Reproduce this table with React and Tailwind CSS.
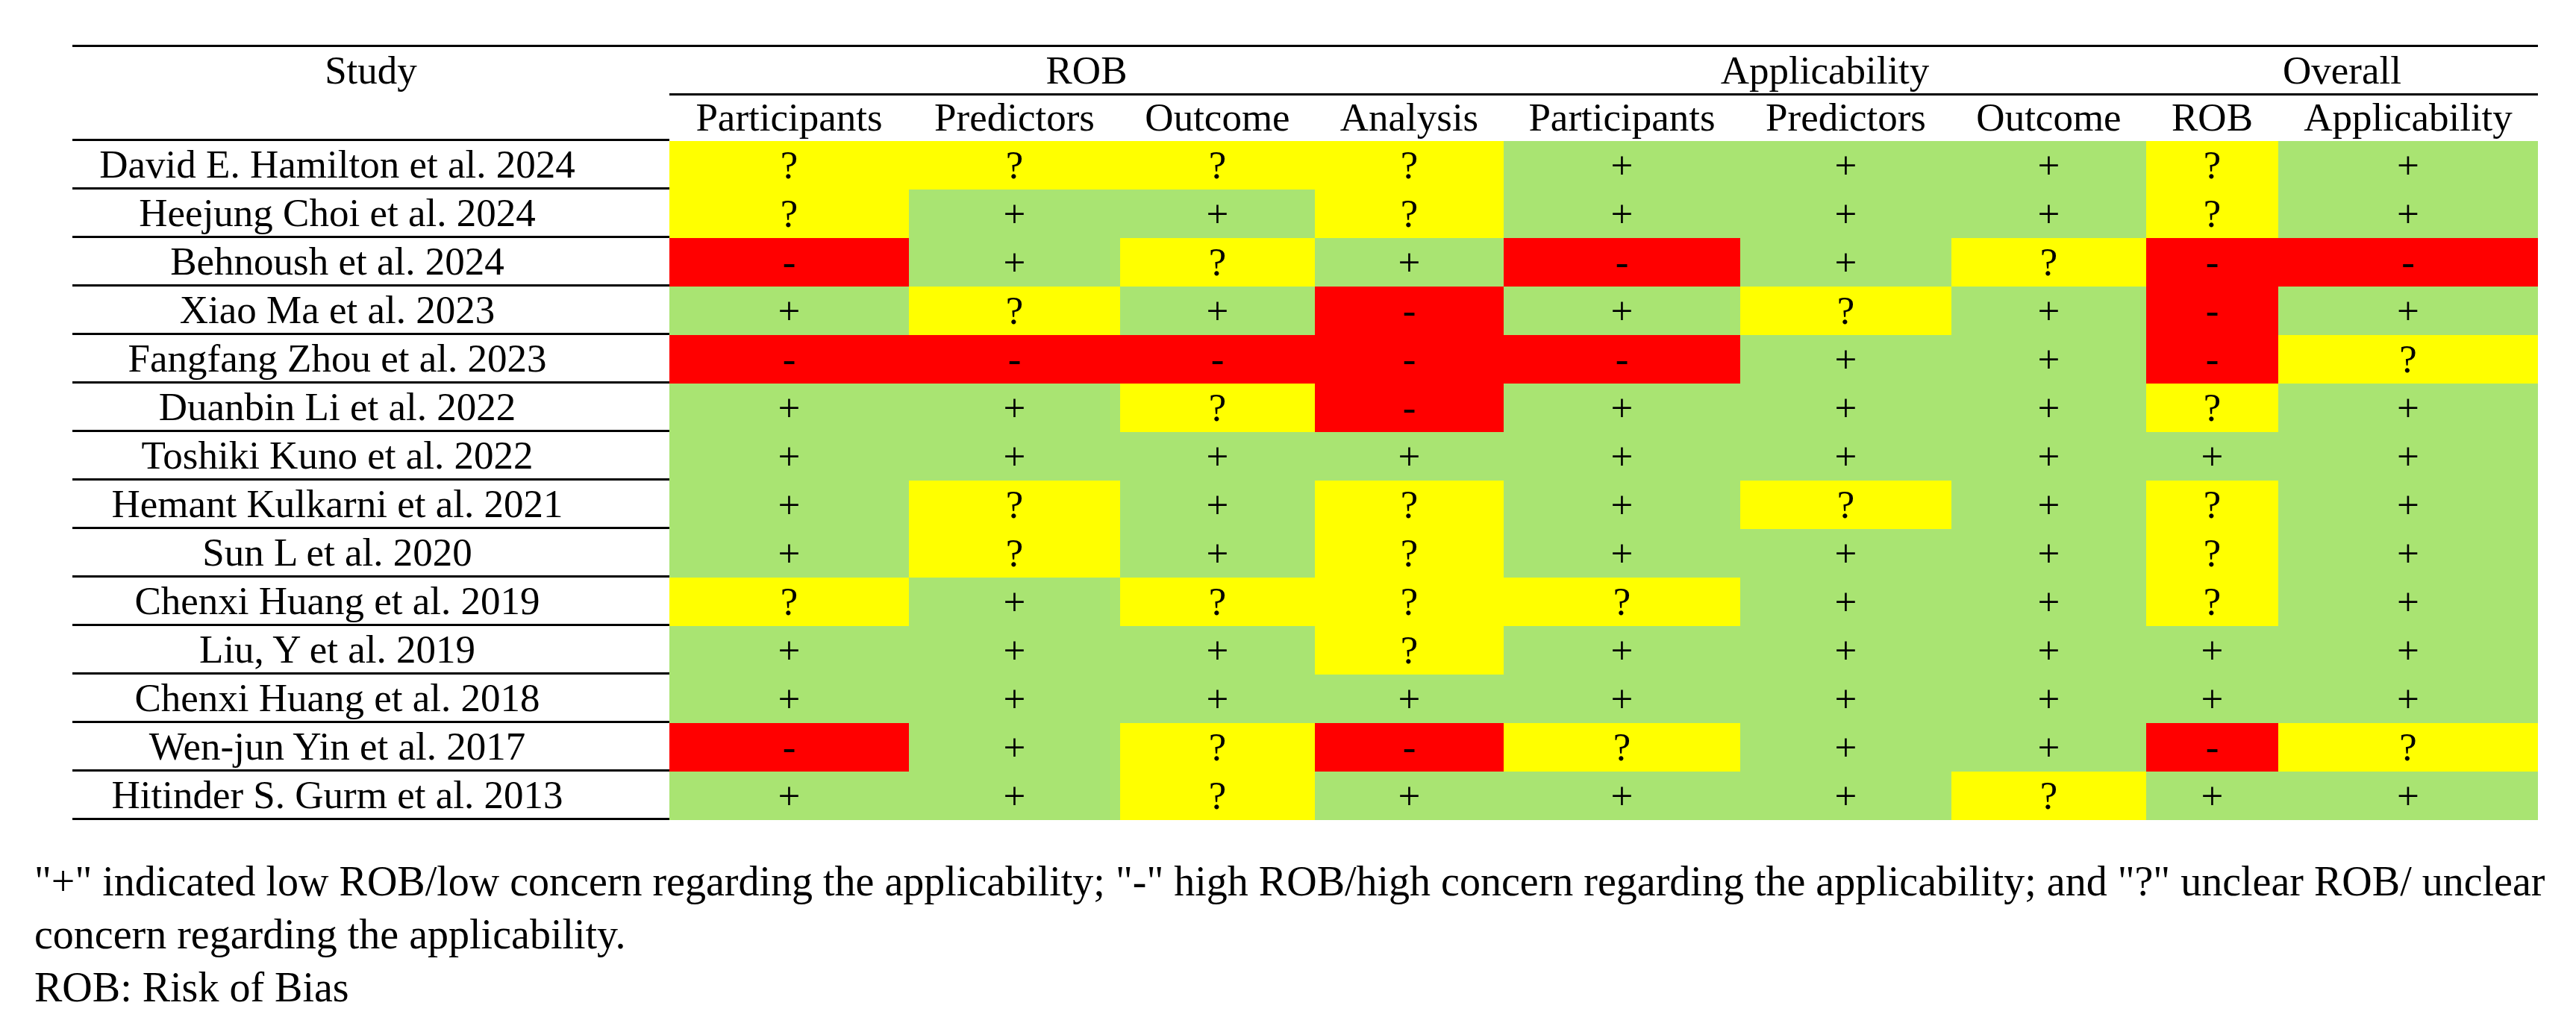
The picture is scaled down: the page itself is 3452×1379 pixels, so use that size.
import React from 'react';

// P = low ROB (+), Q = unclear (?), M = high ROB (-)
const studies = [
  ['David E. Hamilton et al. 2024', 'QQQQPPPQP'],
  ['Heejung Choi et al. 2024', 'QPPQPPPQP'],
  ['Behnoush et al. 2024', 'MPQPMPQMM'],
  ['Xiao Ma et al. 2023', 'PQPMPQPMP'],
  ['Fangfang Zhou et al. 2023', 'MMMMMPPMQ'],
  ['Duanbin Li et al. 2022', 'PPQMPPPQP'],
  ['Toshiki Kuno et al. 2022', 'PPPPPPPPP'],
  ['Hemant Kulkarni et al. 2021', 'PQPQPQPQP'],
  ['Sun L et al. 2020', 'PQPQPPPQP'],
  ['Chenxi Huang et al. 2019', 'QPQQQPPQP'],
  ['Liu, Y et al. 2019', 'PPPQPPPPP'],
  ['Chenxi Huang et al. 2018', 'PPPPPPPPP'],
  ['Wen-jun Yin et al. 2017', 'MPQMQPPMQ'],
  ['Hitinder S. Gurm et al. 2013', 'PPQPPPQPP'],
];

const subHeads = ['Participants', 'Predictors', 'Outcome', 'Analysis', 'Participants', 'Predictors', 'Outcome', 'ROB', 'Applicability'];

const cellStyle = {
  P: { bg: 'bg-[#a9e472]', sym: '+' },
  Q: { bg: 'bg-[#ffff00]', sym: '?' },
  M: { bg: 'bg-[#ff0000]', sym: '-' },
};

const cols = 'grid grid-cols-[800px_321px_283px_261px_253px_317px_283px_261px_177px_348px]';

function Cell({ code }) {
  const c = cellStyle[code];
  return (
    <div className={`${c.bg} h-[65px] flex items-center justify-center leading-[65px]`}>
      {c.sym}
    </div>
  );
}

export default function App() {
  return (
    <div className="bg-white min-h-screen w-[3452px] h-[1379px] overflow-hidden text-black font-['Liberation_Serif','Times_New_Roman',serif]">
      <div className="pt-[60px] pl-[97px] text-[53px]">
        <div className="w-[3304px] border-t-[3px] border-black">
          {/* group header */}
          <div className={`${cols} h-[65px]`}>
            <div className="flex items-center justify-center leading-[62px] h-[62px]">Study</div>
            <div className="col-span-4 flex items-center justify-center border-b-[3px] border-black leading-[62px]">ROB</div>
            <div className="col-span-3 flex items-center justify-center border-b-[3px] border-black leading-[62px]">Applicability</div>
            <div className="col-span-2 flex items-center justify-center border-b-[3px] border-black leading-[62px]">Overall</div>
          </div>
          {/* sub header */}
          <div className={`${cols} h-[61px]`}>
            <div className="border-b-[3px] border-black" />
            {subHeads.map((h, i) => (
              <div key={i} className="flex items-center justify-center leading-[58px] h-[58px]">{h}</div>
            ))}
          </div>
          {/* rows */}
          {studies.map(([name, codes]) => (
            <div key={name} className={`${cols} h-[65px]`}>
              <div className="h-[65px] border-b-[3px] border-black flex items-center justify-center pr-[90px] leading-[62px] whitespace-nowrap">
                {name}
              </div>
              {codes.split('').map((c, i) => (
                <Cell key={i} code={c} />
              ))}
            </div>
          ))}
        </div>
      </div>
      <div className="mt-[47px] pl-[46px] text-[56px] leading-[71px] whitespace-nowrap">
        <p>"+" indicated low ROB/low concern regarding the applicability; "-" high ROB/high concern regarding the applicability; and "?" unclear ROB/ unclear</p>
        <p>concern regarding the applicability.</p>
        <p>ROB: Risk of Bias</p>
      </div>
    </div>
  );
}
